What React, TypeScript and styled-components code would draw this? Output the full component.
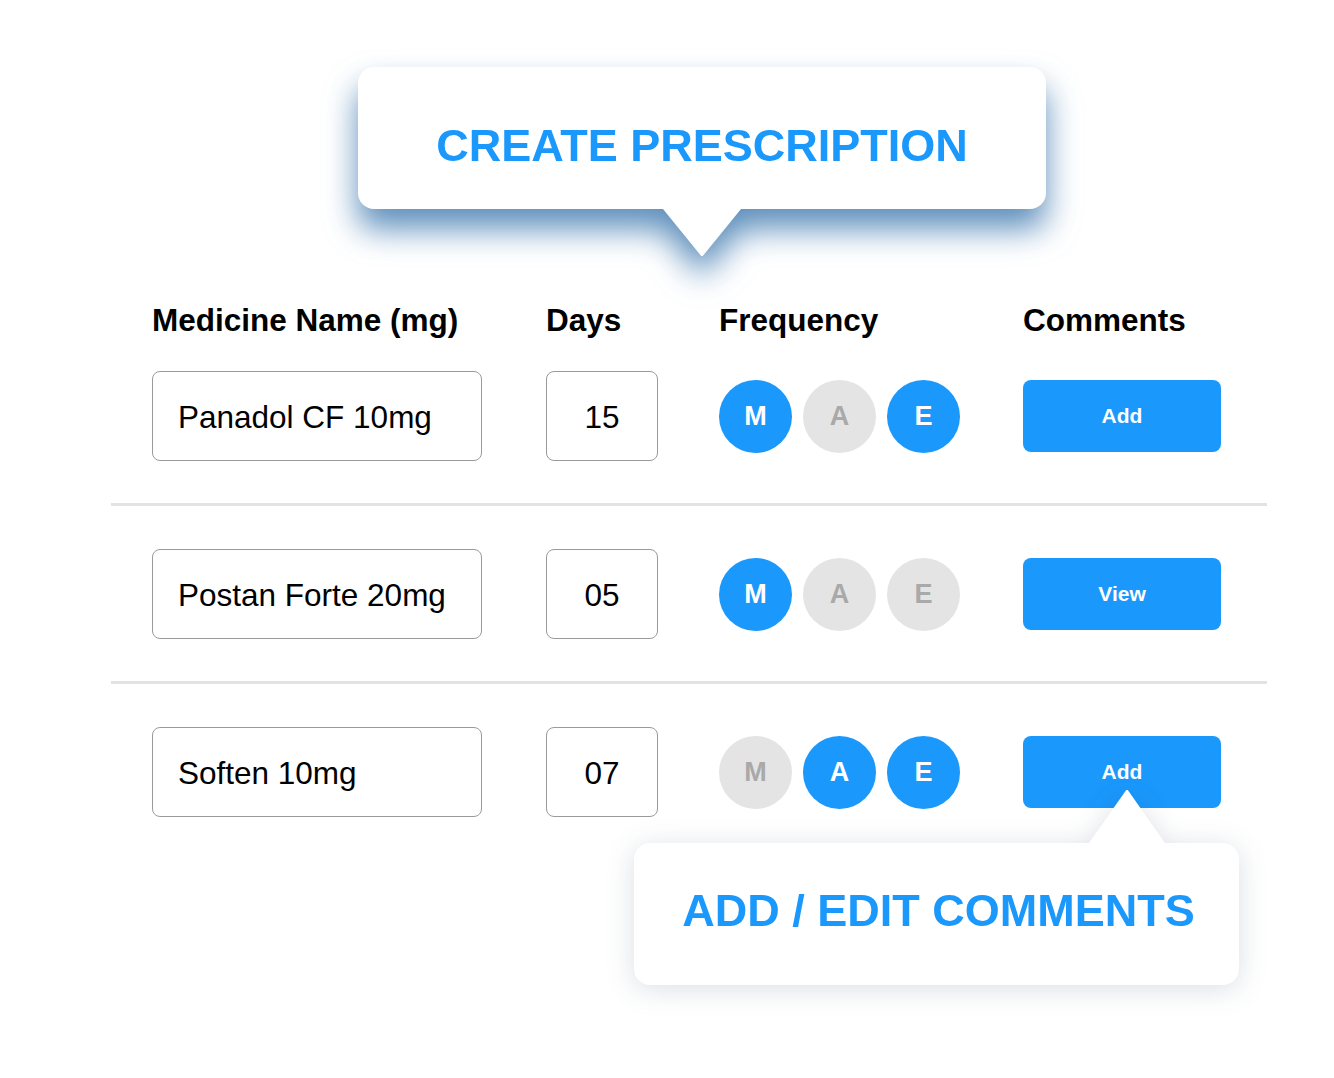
import React from "react";
import styled, { createGlobalStyle } from "styled-components";

const BLUE = "#1a98fc";

const GlobalStyle = createGlobalStyle`
    html, body {
        margin: 0;
        padding: 0;
        background: #ffffff;
        font-family: "Liberation Sans", Arial, Helvetica, sans-serif;
    }
`;

type Med = {
    name: string;
    days: string;
    freq: [boolean, boolean, boolean];
    action: string;
    tip?: boolean;
};

const meds: Med[] = [
    { name: "Panadol CF 10mg", days: "15", freq: [true, false, true], action: "Add" },
    { name: "Postan Forte 20mg", days: "05", freq: [true, false, false], action: "View" },
    { name: "Soften 10mg", days: "07", freq: [false, true, true], action: "Add", tip: true },
];

const App = () => {
    return <>
        <GlobalStyle />
        <Page>
            <TopCallout>
                <CalloutBox>
                    <CalloutTitle>CREATE PRESCRIPTION</CalloutTitle>
                </CalloutBox>
                <DownArrow />
            </TopCallout>

            <Table>
                <HeaderRow>
                    <HeadCell>Medicine Name (mg)</HeadCell>
                    <HeadCell>Days</HeadCell>
                    <HeadCell>Frequency</HeadCell>
                    <HeadCell>Comments</HeadCell>
                </HeaderRow>

                {meds.map((m, i) => (
                    <React.Fragment key={m.name}>
                        {i > 0 && <Divider />}
                        <Row>
                            <Field>{m.name}</Field>
                            <DaysField>{m.days}</DaysField>
                            <Freq>
                                {["M", "A", "E"].map((l, j) => (
                                    <Dot key={l} active={m.freq[j]}>{l}</Dot>
                                ))}
                            </Freq>
                            <CommentCell>
                                <ActionButton>{m.action}</ActionButton>
                                {m.tip &&
                                    <Tooltip>
                                        <UpArrow />
                                        <TooltipBox>
                                            <CalloutTitle>ADD / EDIT COMMENTS</CalloutTitle>
                                        </TooltipBox>
                                    </Tooltip>
                                }
                            </CommentCell>
                        </Row>
                    </React.Fragment>
                ))}
            </Table>
        </Page>
    </>;
};

export default App;

const Page = styled.div`
    width: 1334px;
    height: 1078px;
    padding-top: 67px;
    box-sizing: border-box;
    overflow: hidden;
`;

const TopCallout = styled.div`
    margin-left: 358px;
    width: 688px;
    display: flex;
    flex-direction: column;
    align-items: center;
    filter: drop-shadow(0 20px 16px rgba(25, 95, 160, 0.7));
`;

const CalloutBox = styled.div`
    width: 100%;
    height: 142px;
    background: #ffffff;
    border-radius: 16px;
    display: flex;
    align-items: center;
    justify-content: center;
    padding-top: 16px;
    box-sizing: border-box;
`;

const CalloutTitle = styled.div`
    font-size: 45px;
    font-weight: 700;
    color: ${BLUE};
    white-space: nowrap;
`;

const DownArrow = styled.div`
    width: 78px;
    height: 47px;
    background: #ffffff;
    clip-path: polygon(0 0, 100% 0, 51% 100%, 49% 100%);
`;

const Table = styled.div`
    margin-left: 111px;
    width: 1156px;
    margin-top: 46px;
`;

const columns = `
    display: grid;
    grid-template-columns: 394px 173px 304px 198px;
    padding-left: 41px;
`;

const HeaderRow = styled.div`
    ${columns}
    margin-bottom: 33px;
`;

const HeadCell = styled.div`
    font-size: 31.5px;
    line-height: 36px;
    font-weight: 700;
    color: #000000;
    white-space: nowrap;
`;

const Row = styled.div`
    ${columns}
    height: 90px;
    align-items: center;
`;

const Divider = styled.div`
    height: 3px;
    background: #e3e3e3;
    margin: 42px 0 43px;
`;

const Field = styled.div`
    width: 330px;
    height: 90px;
    box-sizing: border-box;
    border: 1px solid #9a9a9a;
    border-radius: 8px;
    display: flex;
    align-items: center;
    padding: 3px 0 0 25px;
    font-size: 31.5px;
    color: #000000;
    white-space: nowrap;
`;

const DaysField = styled(Field)`
    width: 112px;
    justify-content: center;
    padding-left: 0;
`;

const Freq = styled.div`
    display: flex;
    gap: 11px;
`;

const Dot = styled.div<{ active: boolean }>`
    width: 73px;
    height: 73px;
    border-radius: 50%;
    background: ${(p) => (p.active ? BLUE : "#e4e4e4")};
    color: ${(p) => (p.active ? "#ffffff" : "#a9a9a9")};
    font-size: 27px;
    font-weight: 700;
    display: flex;
    align-items: center;
    justify-content: center;
`;

const CommentCell = styled.div`
    position: relative;
`;

const ActionButton = styled.div`
    width: 198px;
    height: 72px;
    border-radius: 8px;
    background: ${BLUE};
    color: #ffffff;
    font-size: 21px;
    font-weight: 700;
    display: flex;
    align-items: center;
    justify-content: center;
`;

const Tooltip = styled.div`
    position: absolute;
    top: 54px;
    left: -389px;
    width: 605px;
    display: flex;
    flex-direction: column;
    filter: drop-shadow(0 4px 14px rgba(30, 50, 90, 0.16));
`;

const UpArrow = styled.div`
    margin-left: 455px;
    width: 76px;
    height: 53px;
    background: #ffffff;
    clip-path: polygon(49% 0, 51% 0, 100% 100%, 0 100%);
`;

const TooltipBox = styled.div`
    height: 142px;
    background: #ffffff;
    border-radius: 16px;
    display: flex;
    align-items: center;
    justify-content: center;
    padding: 0 0 6px 4px;
    box-sizing: border-box;
`;
